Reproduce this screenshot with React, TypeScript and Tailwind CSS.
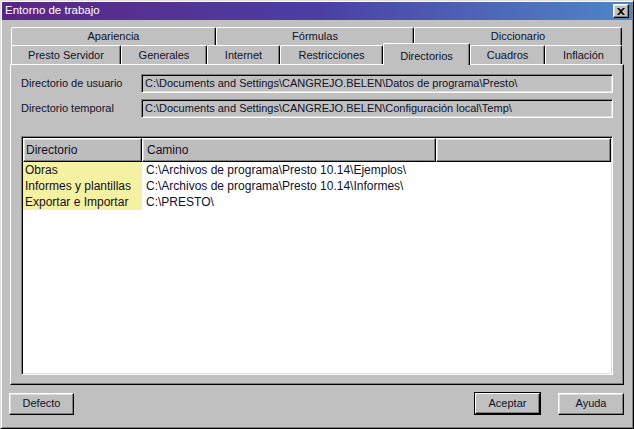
import React from "react";

const raised =
  "border border-t-white border-l-white border-r-black border-b-black shadow-[inset_-1px_-1px_#808080,inset_1px_1px_#dfdfdf]";
const sunken =
  "border border-t-[#808080] border-l-[#808080] border-r-white border-b-white shadow-[inset_1px_1px_#000,inset_-1px_-1px_#dfdfdf]";

function Tab({ label, w, top }: { label: string; w: number; top?: boolean }) {
  return (
    <div
      className={`flex items-center justify-center h-full border-l border-t border-r border-l-white border-t-white border-r-black shadow-[inset_-1px_0_#808080] rounded-t-[2px] text-[11px] text-[#10102a] ${top ? "pb-[1px]" : ""}`}
      style={{ width: w }}
    >
      {label}
    </div>
  );
}

export default function App() {
  const rows = [
    ["Obras", "C:\\Archivos de programa\\Presto 10.14\\Ejemplos\\"],
    ["Informes y plantillas", "C:\\Archivos de programa\\Presto 10.14\\Informes\\"],
    ["Exportar e Importar", "C:\\PRESTO\\"],
  ];
  return (
    <div className="w-[634px] h-[429px] bg-[#c0c0c0] font-['Liberation_Sans',Arial,sans-serif] border border-t-[#dfdfdf] border-l-[#dfdfdf] border-r-black border-b-black shadow-[inset_1px_1px_#fff,inset_-1px_-1px_#808080] p-[1px] flex flex-col overflow-hidden">
      {/* title bar */}
      <div className="h-[18px] flex items-center justify-between bg-gradient-to-r from-[#5a2584] via-[#4a3ea4] to-[#4d86c8] pl-[3px] pr-[3px]">
        <span className="text-white text-[11.5px] leading-none">Entorno de trabajo</span>
        <div className={`w-[16px] h-[14px] bg-[#c0c0c0] ${raised} flex items-center justify-center`}>
          <svg width="8" height="7" viewBox="0 0 8 7">
            <path d="M0 0h2l2 2 2-2h2L5 3.5 8 7H6L4 5 2 7H0l3-3.5z" fill="#000" />
          </svg>
        </div>
      </div>

      <div className="pl-[8px] mt-[7px] flex flex-col">
        {/* tab row 1 */}
        <div className="ml-[1px] h-[18px] flex">
          <Tab label="Apariencia" w={205} top />
          <Tab label="Fórmulas" w={198} top />
          <Tab label="Diccionario" w={208} top />
        </div>
        {/* tab row 2 */}
        <div className="ml-[1px] h-[19px] flex items-end relative z-10">
          <div className="h-[19px] flex">
            <Tab label="Presto Servidor" w={110} />
            <Tab label="Generales" w={86} />
            <Tab label="Internet" w={73} />
            <Tab label="Restricciones" w={103} />
          </div>
          <div className="w-[87px] h-[22px] mb-[-1px] bg-[#c0c0c0] flex items-start justify-center pt-[4px] border-l border-t border-r border-l-white border-t-white border-r-black shadow-[inset_-1px_0_#808080] rounded-t-[2px] text-[11px] text-[#10102a]">
            Directorios
          </div>
          <div className="h-[19px] flex">
            <Tab label="Cuadros" w={75} />
            <Tab label="Inflación" w={77} />
          </div>
        </div>

        {/* panel */}
        <div className="w-[614px] h-[321px] border border-t-white border-l-white border-r-black border-b-black shadow-[inset_-1px_-1px_#808080] pt-[9px] pl-[10px] flex flex-col">
          <div className="flex flex-col gap-[6px]">
            <div className="flex items-center h-[19px]">
              <span className="w-[120px] text-[11px] text-[#10102a]">Directorio de usuario</span>
              <div className={`w-[472px] h-[19px] ${sunken} flex items-center pl-[3px] text-[11px] text-[#10102a] whitespace-nowrap`}>
                C:\Documents and Settings\CANGREJO.BELEN\Datos de programa\Presto\
              </div>
            </div>
            <div className="flex items-center h-[19px]">
              <span className="w-[120px] text-[11px] text-[#10102a]">Directorio temporal</span>
              <div className={`w-[472px] h-[19px] ${sunken} flex items-center pl-[3px] text-[11px] text-[#10102a] whitespace-nowrap`}>
                C:\Documents and Settings\CANGREJO.BELEN\Configuración local\Temp\
              </div>
            </div>
          </div>

          {/* table */}
          <div className={`mt-[18px] w-[592px] h-[239px] ${sunken} p-[1px] flex flex-col bg-white`}>
            <div className="h-[24px] flex bg-[#bdbdbd] text-[12px] text-[#10102a]">
              <div className={`w-[119px] ${raised} bg-[#bdbdbd] flex items-center pl-[2px]`}>Directorio</div>
              <div className={`w-[294px] ${raised} bg-[#bdbdbd] flex items-center pl-[4px]`}>Camino</div>
              <div className={`flex-1 ${raised} bg-[#bdbdbd]`} />
            </div>
            <div className="flex flex-col text-[12px] text-[#10102a]">
              {rows.map(([a, b]) => (
                <div key={a} className="h-[16px] flex items-center">
                  <div className="w-[119px] h-full bg-[#f5f1a2] pl-[2px] flex items-center whitespace-nowrap">{a}</div>
                  <div className="pl-[4px] whitespace-nowrap">{b}</div>
                </div>
              ))}
            </div>
          </div>
        </div>

        {/* buttons */}
        <div className="mt-[7px] ml-[-1px] w-[615px] flex items-center">
          <button className={`w-[65px] h-[22px] ${raised} bg-[#c0c0c0] text-[11px] text-[#10102a]`}>Defecto</button>
          <div className="flex-1" />
          <button className="w-[67px] h-[23px] border border-black bg-[#c0c0c0] p-0">
            <div className="w-full h-full border border-t-white border-l-white border-r-black border-b-black shadow-[inset_-1px_-1px_#808080] flex items-center justify-center text-[11px] text-[#10102a]">
              Aceptar
            </div>
          </button>
          <button className={`ml-[17px] w-[66px] h-[22px] ${raised} bg-[#c0c0c0] text-[11px] text-[#10102a]`}>Ayuda</button>
        </div>
      </div>
    </div>
  );
}
